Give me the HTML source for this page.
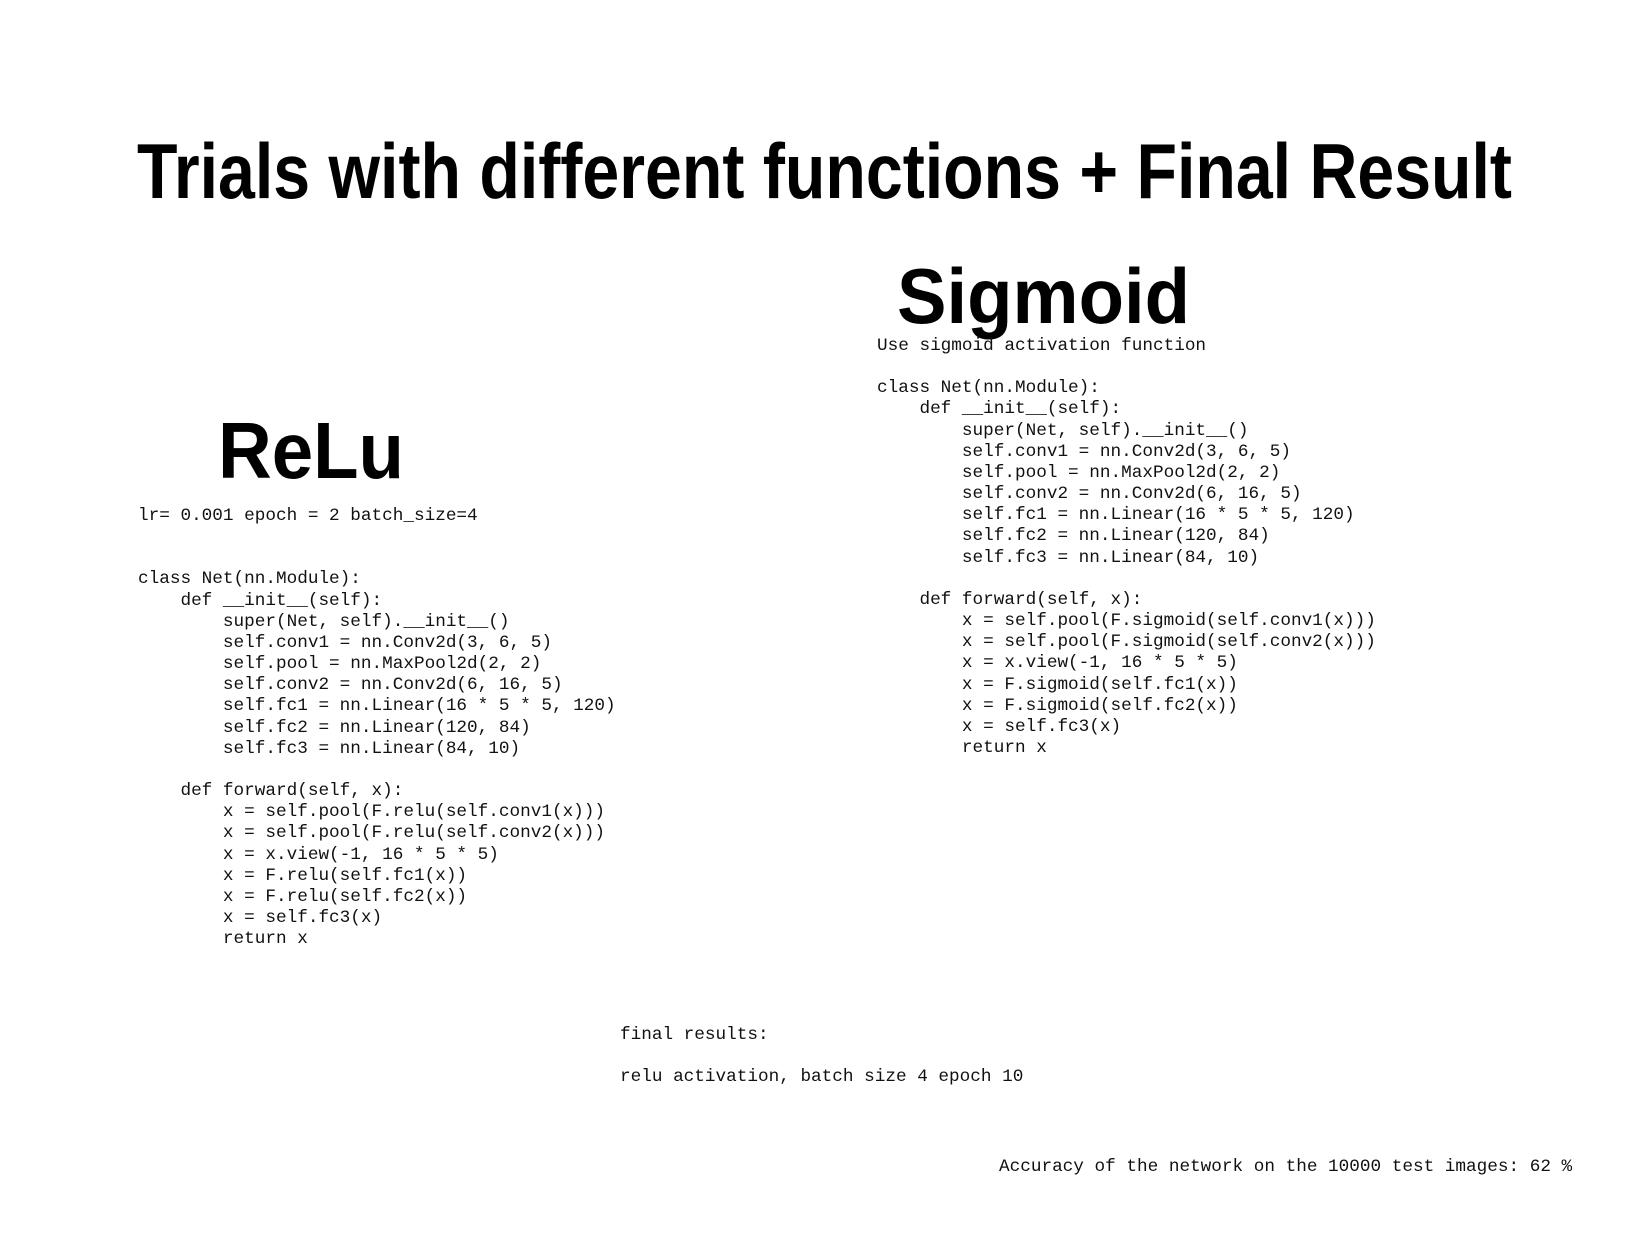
<!DOCTYPE html>
<html><head><meta charset="utf-8"><style>
html,body{margin:0;padding:0;background:#fff;width:1650px;height:1236px;overflow:hidden;position:relative}
pre{position:absolute;margin:0;font-family:"Liberation Mono","DejaVu Sans Mono",monospace;font-size:17.7px;line-height:21.16px;color:#111}
svg{position:absolute;left:0;top:0}
</style></head><body>
<svg width="1650" height="1236">
<text x="137" y="198" font-family="Liberation Sans, sans-serif" font-size="78" font-weight="bold" textLength="1375" lengthAdjust="spacingAndGlyphs">Trials with different functions + Final Result</text>
<text x="897" y="323" font-family="Liberation Sans, sans-serif" font-size="78" font-weight="bold" textLength="293" lengthAdjust="spacingAndGlyphs">Sigmoid</text>
<text x="218" y="478" font-family="Liberation Sans, sans-serif" font-size="80" font-weight="bold" textLength="186" lengthAdjust="spacingAndGlyphs">ReLu</text>
</svg>
<pre style="left:877px;top:336px">Use sigmoid activation function

class Net(nn.Module):
    def __init__(self):
        super(Net, self).__init__()
        self.conv1 = nn.Conv2d(3, 6, 5)
        self.pool = nn.MaxPool2d(2, 2)
        self.conv2 = nn.Conv2d(6, 16, 5)
        self.fc1 = nn.Linear(16 * 5 * 5, 120)
        self.fc2 = nn.Linear(120, 84)
        self.fc3 = nn.Linear(84, 10)

    def forward(self, x):
        x = self.pool(F.sigmoid(self.conv1(x)))
        x = self.pool(F.sigmoid(self.conv2(x)))
        x = x.view(-1, 16 * 5 * 5)
        x = F.sigmoid(self.fc1(x))
        x = F.sigmoid(self.fc2(x))
        x = self.fc3(x)
        return x</pre>
<pre style="left:138px;top:506px">lr= 0.001 epoch = 2 batch_size=4


class Net(nn.Module):
    def __init__(self):
        super(Net, self).__init__()
        self.conv1 = nn.Conv2d(3, 6, 5)
        self.pool = nn.MaxPool2d(2, 2)
        self.conv2 = nn.Conv2d(6, 16, 5)
        self.fc1 = nn.Linear(16 * 5 * 5, 120)
        self.fc2 = nn.Linear(120, 84)
        self.fc3 = nn.Linear(84, 10)

    def forward(self, x):
        x = self.pool(F.relu(self.conv1(x)))
        x = self.pool(F.relu(self.conv2(x)))
        x = x.view(-1, 16 * 5 * 5)
        x = F.relu(self.fc1(x))
        x = F.relu(self.fc2(x))
        x = self.fc3(x)
        return x</pre>
<pre style="left:620px;top:1025px">final results:

relu activation, batch size 4 epoch 10</pre>
<pre style="left:999px;top:1157px">Accuracy of the network on the 10000 test images: 62 %</pre>
</body></html>
